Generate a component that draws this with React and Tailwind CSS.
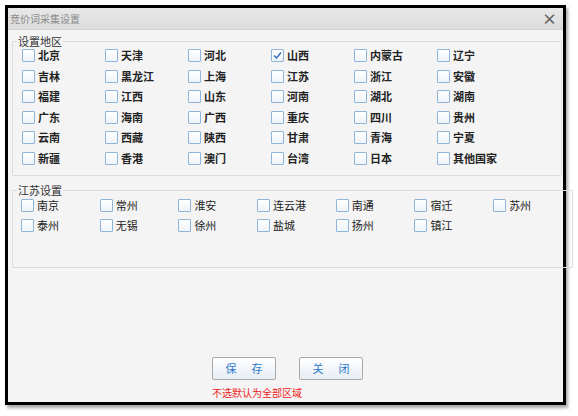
import { useState } from 'react';

const provinces = [
    '北京', '天津', '河北', '山西', '内蒙古', '辽宁',
    '吉林', '黑龙江', '上海', '江苏', '浙江', '安徽',
    '福建', '江西', '山东', '河南', '湖北', '湖南',
    '广东', '海南', '广西', '重庆', '四川', '贵州',
    '云南', '西藏', '陕西', '甘肃', '青海', '宁夏',
    '新疆', '香港', '澳门', '台湾', '日本', '其他国家',
];

const jiangsuCities = [
    '南京', '常州', '淮安', '连云港', '南通', '宿迁', '苏州',
    '泰州', '无锡', '徐州', '盐城', '扬州', '镇江',
];

const CheckItem = ({ label, checked, onToggle, bold }) => (
    <label className="flex items-center h-[13px] cursor-pointer select-none" onClick={onToggle}>
        <span className="relative w-[13px] h-[13px] shrink-0 border border-[#8fb6d8] rounded-[1px] bg-gradient-to-b from-white to-[#eef4fa]">
            {checked && (
                <svg viewBox="0 0 13 13" className="absolute -left-px -top-px w-[13px] h-[13px]">
                    <path d="M3 6.5 L5.5 9 L10 3.5" fill="none" stroke="#2f6fb8" strokeWidth="1.4" />
                </svg>
            )}
        </span>
        <span className={`ml-[3px] text-[11px] leading-[11px] text-[#222] whitespace-nowrap ${bold ? 'font-bold' : ''}`}>{label}</span>
    </label>
);

const App = () => {
    const [regions, setRegions] = useState(['山西']);
    const [cities, setCities] = useState([]);

    const toggle = (list, setList, name) => {
        setList(list.includes(name) ? list.filter(n => n !== name) : [...list, name]);
    };

    const fieldsetClass = "border border-[#dcdcdc] rounded-[1px]";
    const legendClass = "px-[1px] text-[11px] leading-[11px] text-[#333]";
    const buttonClass = "w-[64px] h-[23px] flex items-center justify-center gap-[15px] text-[11px] text-[#2b78cc] border border-[#a9a9a9] rounded-[2px] bg-gradient-to-b from-white to-[#e6edf3]";

    return (
        <div className="w-[578px] h-[416px] bg-white pt-[5px] pl-[5px] font-['Noto_Sans_CJK_SC',sans-serif]">
            <div className="w-[561px] h-[400px] border-[3px] border-black bg-[#f4f4f4] flex flex-col shadow-[2px_3px_3px_rgba(0,0,0,0.35)]">
                <div className="h-[22px] shrink-0 flex items-center justify-between pl-[2px] pr-[6px] bg-gradient-to-b from-[#e8e8e8] to-[#dcdcdc] border-b border-[#d2d2d2]">
                    <span className="text-[10px] text-[#8a8a8a]">竞价词采集设置</span>
                    <span className="text-[15px] leading-none font-bold text-[#666]">×</span>
                </div>

                <div className="flex-1 flex flex-col pl-[4px] pr-[1px]">
                    <fieldset className={`${fieldsetClass} mt-[6px] pl-[9px] pt-[2px] pb-[10px]`}>
                        <legend className={`${legendClass} ml-[-5px]`}>设置地区</legend>
                        <div className="grid grid-cols-[repeat(6,83px)] gap-y-[7.6px]">
                            {provinces.map(p => (
                                <CheckItem key={p} label={p} bold checked={regions.includes(p)} onToggle={(e) => { e.preventDefault(); toggle(regions, setRegions, p); }} />
                            ))}
                        </div>
                    </fieldset>

                    <fieldset className={`${fieldsetClass} mt-[9px] pl-[8px] pt-[3px] pb-[35px]`}>
                        <legend className={`${legendClass} ml-[-4px]`}>江苏设置</legend>
                        <div className="grid grid-cols-[repeat(7,78.7px)] gap-y-[7.5px]">
                            {jiangsuCities.map(c => (
                                <CheckItem key={c} label={c} checked={cities.includes(c)} onToggle={(e) => { e.preventDefault(); toggle(cities, setCities, c); }} />
                            ))}
                        </div>
                    </fieldset>

                    <div className="mt-auto flex flex-col items-center pl-[1px] pb-[2px]">
                        <div className="flex gap-[23px]">
                            <button className={buttonClass}><span>保</span><span>存</span></button>
                            <button className={buttonClass}><span>关</span><span>闭</span></button>
                        </div>
                        <p className="mt-[6px] w-[151px] text-[10px] leading-[14px] text-[#ee1c1c]">不选默认为全部区域</p>
                    </div>
                </div>
            </div>
        </div>
    );
};

export default App;
